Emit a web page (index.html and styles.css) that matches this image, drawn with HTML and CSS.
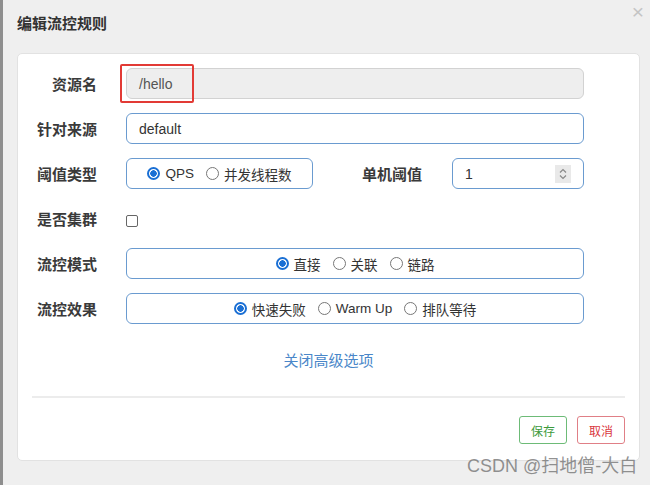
FILE: index.html
```html
<!DOCTYPE html>
<html lang="zh-CN">
<head>
    <meta charset="UTF-8">
    <title>编辑流控规则</title>
    <link rel="stylesheet" href="styles.css">
</head>
<body>

<div class="modal">
    <div class="modal__header">
        <h4 class="modal__title">编辑流控规则</h4>
        <span class="modal__close">&times;</span>
    </div>

    <div class="modal__body">
        <div class="form">
            <div class="form__row">
                <label class="form__label">资源名</label>
                <div class="form__control form__control--disabled">
                    /hello
                    <span class="highlight"></span>
                </div>
            </div>
            <div class="form__row">
                <label class="form__label">针对来源</label>
                <div class="form__control">default</div>
            </div>
            <div class="form__row">
                <label class="form__label">阈值类型</label>
                <div class="form__control form__control--radios form__control--short">
                    <span class="radio is-checked"></span>QPS
                    <span class="radio"></span>并发线程数
                </div>
                <label class="form__label form__label--inline">单机阈值</label>
                <div class="form__control form__control--number">
                    1
                    <span class="spinner">
                        <svg width="16" height="18" viewBox="0 0 16 18">
                            <path d="M5 7.5 L8 4.5 L11 7.5" fill="none" stroke="#888" stroke-width="1.2"/>
                            <path d="M5 10.5 L8 13.5 L11 10.5" fill="none" stroke="#888" stroke-width="1.2"/>
                        </svg>
                    </span>
                </div>
            </div>
            <div class="form__row">
                <label class="form__label">是否集群</label>
                <span class="checkbox"></span>
            </div>
            <div class="form__row">
                <label class="form__label">流控模式</label>
                <div class="form__control form__control--radios">
                    <span class="radio is-checked"></span>直接
                    <span class="radio"></span>关联
                    <span class="radio"></span>链路
                </div>
            </div>
            <div class="form__row">
                <label class="form__label">流控效果</label>
                <div class="form__control form__control--radios">
                    <span class="radio is-checked"></span>快速失败
                    <span class="radio"></span>Warm Up
                    <span class="radio"></span>排队等待
                </div>
            </div>
        </div>

        <div class="toggle"><a>关闭高级选项</a></div>

        <div class="divider"></div>

        <div class="footer">
            <button class="btn btn--save">保存</button>
            <button class="btn btn--cancel">取消</button>
        </div>
    </div>

    <div class="watermark">CSDN @扫地僧-大白</div>
</div>

</body>
</html>
```

FILE: styles.css
```css
*{
    box-sizing: border-box;
    margin:0;
    padding:0;
}
body{
    background:#efefef;
    font-family: "Liberation Sans", "Noto Sans CJK SC", sans-serif;
    color:#333;
}
.modal{
    position:relative;
    width:650px;
    height:485px;
    border-left:3px solid #8e8e8e;
    padding:0 10px 0 14px;
}
.modal__header{
    height:44px;
    display:flex;
    align-items:center;
    justify-content:space-between;
}
.modal__title{
    font-size:15px;
    font-weight:bold;
    color:#333;
}
.modal__close{
    align-self:flex-start;
    margin-top:1px;
    margin-right:-4px;
    font-size:21px;
    line-height:22px;
    color:#c4c4c4;
}
.modal__body{
    margin-top:9px;
    height:408px;
    background:#fff;
    border:1px solid #e2e2e2;
    border-radius:5px;
}
.form{
    padding:14px 55px 0 0;
    display:flex;
    flex-direction:column;
    gap:14px;
}
.form__row{
    display:flex;
    align-items:center;
    height:31px;
}
.form__label{
    width:79px;
    flex-shrink:0;
    text-align:right;
    font-size:15px;
    font-weight:bold;
    color:#3a3a3a;
    margin-right:29px;
}
.form__label--inline{
    width:109px;
    margin-right:30px;
}
.form__control{
    position:relative;
    flex:1;
    height:31px;
    display:flex;
    align-items:center;
    padding:0 12px;
    border:1px solid #6a9bd0;
    border-radius:6px;
    font-size:14px;
    color:#333;
}
.form__control--disabled{
    background:#eee;
    border-color:#d2d2d2;
    color:#555;
}
.form__control--short{
    flex:0 0 187px;
}
.form__control--number{
    flex:0 0 132px;
    justify-content:space-between;
    padding-right:12px;
}
.form__control--radios{
    justify-content:center;
    font-size:13.5px;
}
.spinner{
    display:block;
    width:16px;
    height:18px;
    background:#e9e9e9;
}
.spinner svg{
    display:block;
}
.radio{
    width:13px;
    height:13px;
    border:1px solid #777;
    border-radius:50%;
    margin:0 5px 0 12px;
    background:#fff;
}
.radio:first-child{
    margin-left:0;
}
.radio.is-checked{
    border:2px solid #1a6fd4;
    background:radial-gradient(circle, #1a6fd4 0 3px, #fff 3.5px);
}
.checkbox{
    display:block;
    width:12px;
    height:12px;
    margin-top:4px;
    border:1.5px solid #666;
    border-radius:2px;
}
.highlight{
    position:absolute;
    left:-7px;
    top:-5px;
    width:74px;
    height:39px;
    border:2px solid #e23a35;
    border-radius:2px;
}
.toggle{
    margin-top:27px;
    text-align:center;
    font-size:15px;
    line-height:20px;
}
.toggle a{
    color:#4a87c9;
}
.divider{
    margin:25px 14px 0;
    height:2px;
    background:#ececec;
}
.footer{
    display:flex;
    justify-content:flex-end;
    gap:10px;
    padding:18px 14px 0 0;
}
.btn{
    width:48px;
    height:28px;
    background:#fff;
    border:1px solid;
    border-radius:3px;
    font-size:12px;
    font-family: "Noto Sans CJK SC", sans-serif;
}
.btn--save{
    color:#3c9a3c;
    border-color:#6dbb77;
}
.btn--cancel{
    color:#d9363e;
    border-color:#e07f86;
}
.watermark{
    position:absolute;
    left:464px;
    top:454px;
    font-size:18px;
    line-height:24px;
    color:rgba(110,110,110,0.75);
    white-space:nowrap;
}
```
